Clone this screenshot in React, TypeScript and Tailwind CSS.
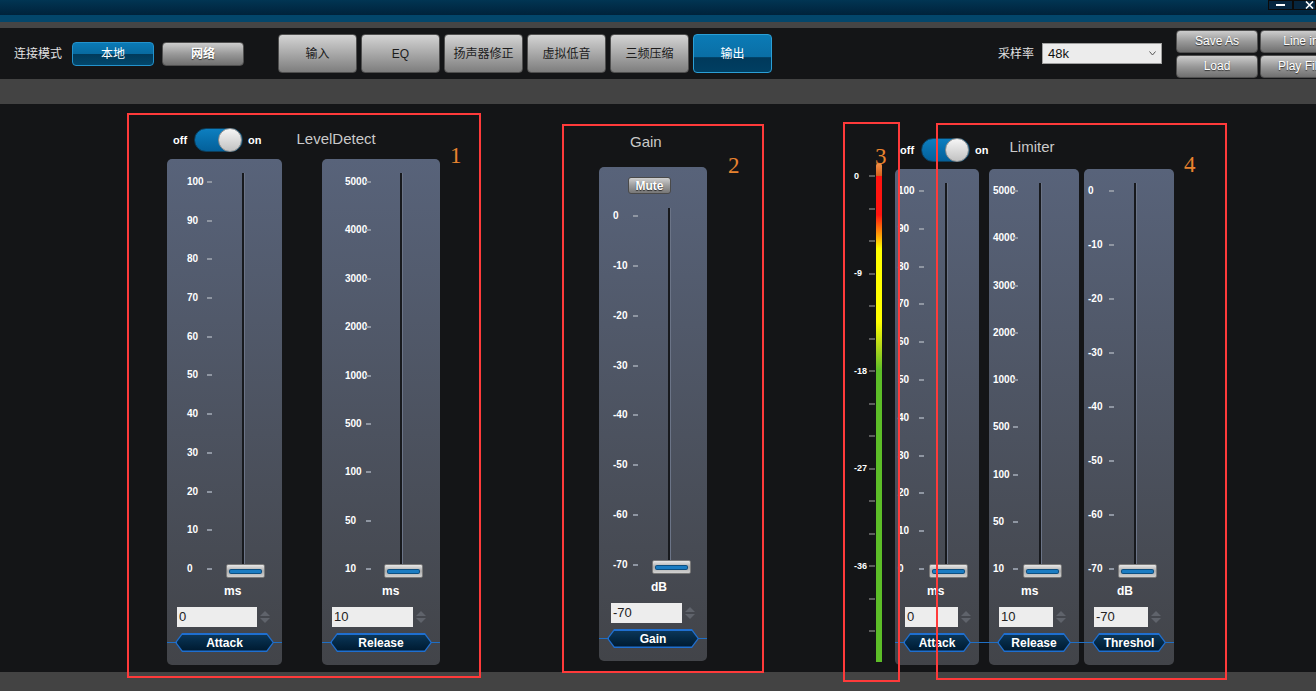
import React from "react";

type FaderProps = {
  cardW: string;
  cardH: string;
  labels: string[];
  scalePl: string;
  labelBox: string;
  scaleMt: string;
  scaleH: string;
  trackMl: string;
  trackH: string;
  unit: string;
  unitPl: string;
  value: string;
  inputPl: string;
  inputW: string;
  name: string;
  mute?: boolean;
  lineX?: string;
};

const Thumb = () => (
  <div className="h-[14px] w-[39px] rounded-[2px] border border-[#7a7a7a] bg-gradient-to-b from-[#e8e8e8] via-[#acacac] to-[#d2d2d2] flex items-center justify-center">
    <div className="h-[3px] w-[31px] rounded-[1px] bg-[#1b7cc2] shadow-[0_0_0_1px_#0d4f80]" />
  </div>
);

const Spinner = () => (
  <div className="ml-[3px] flex flex-col gap-[2px]">
    <div className="w-0 h-0 border-x-[5px] border-x-transparent border-b-[5px] border-b-[#5f636b]" />
    <div className="w-0 h-0 border-x-[5px] border-x-transparent border-t-[5px] border-t-[#5f636b]" />
  </div>
);

// hexagon label with the thin blue line running behind it
const HexLabel = ({ name, lineX }: { name: string; lineX: string }) => (
  <div className="relative h-[19px] px-[8px]">
    <div className={`absolute top-[9px] h-px bg-[#1f6fc4] ${lineX}`} />
    <div className="relative h-full p-[1.5px] bg-[#1f6fd0] [clip-path:polygon(7px_0,calc(100%_-_7px)_0,100%_50%,calc(100%_-_7px)_100%,7px_100%,0_50%)]">
      <div className="h-full w-full bg-gradient-to-b from-[#0c3658] to-[#001a30] [clip-path:polygon(6px_0,calc(100%_-_6px)_0,100%_50%,calc(100%_-_6px)_100%,6px_100%,0_50%)] flex items-center justify-center text-white text-[12px] font-bold leading-none whitespace-nowrap overflow-hidden">
        {name}
      </div>
    </div>
  </div>
);

const Toggle = () => (
  <div className="flex items-center">
    <span className="text-white text-[11px] font-bold">off</span>
    <div className="ml-[7px] w-[49px] h-[24px] rounded-full border border-[#0c3e5c] bg-gradient-to-b from-[#0d7fc0] to-[#04609a] flex justify-end items-center">
      <div className="w-[24px] h-[24px] rounded-full border border-[#8d8d8d] bg-gradient-to-b from-[#f6f6f6] to-[#c2c2c2]" />
    </div>
    <span className="ml-[5px] text-white text-[11px] font-bold">on</span>
  </div>
);

function Fader(p: FaderProps) {
  return (
    <div
      className={`flex flex-col shrink-0 rounded-[5px] bg-gradient-to-b from-[#58637a] to-[#424449] ${p.cardW} ${p.cardH}`}
    >
      {p.mute && (
        <div className="mt-[10px] ml-[29px] w-[43px] h-[17px] rounded-[3px] border border-[#4a4a4a] bg-gradient-to-b from-[#d0d0d0] via-[#9d9d9d] to-[#777777] flex items-center justify-center text-white text-[12px] font-bold [text-shadow:0_1px_1px_#222]">
          Mute
        </div>
      )}
      <div className="flex items-start">
        <div className={`flex flex-col justify-between ${p.scalePl} ${p.scaleMt} ${p.scaleH}`}>
          {p.labels.map((l) => (
            <div key={l} className="h-0 flex items-center">
              <span className={`${p.labelBox} text-[10px] font-bold text-white leading-none whitespace-nowrap`}>
                {l}
              </span>
              <span className="w-[5px] h-[2px] bg-[#8f96a2]" />
            </div>
          ))}
        </div>
        <div className={`flex flex-col w-[39px] mt-[14px] ${p.trackMl} ${p.trackH}`}>
          <div className="ml-[16px] w-[3px] flex-1 bg-[#17191d] border-r border-[#6b7487]" />
          <Thumb />
        </div>
      </div>
      <div className={`mt-[6px] h-[14px] leading-[14px] text-[12px] font-bold text-white ${p.unitPl}`}>
        {p.unit}
      </div>
      <div className={`mt-[9px] flex items-center ${p.inputPl}`}>
        <div className={`h-[20px] bg-[#ededed] text-[13px] text-[#222] pl-[2px] leading-[20px] ${p.inputW}`}>
          {p.value}
        </div>
        <Spinner />
      </div>
      <div className="mt-[6px]">
        <HexLabel name={p.name} lineX={p.lineX ?? "left-0 right-0"} />
      </div>
    </div>
  );
}

const tabs = ["输入", "EQ", "扬声器修正", "虚拟低音", "三频压缩"];
const grayBtn =
  "rounded-[4px] border border-[#505050] bg-gradient-to-b from-[#cdcdcd] via-[#999999] to-[#707070] text-white text-[12px] [text-shadow:0_1px_1px_#333] flex items-center justify-center shrink-0";

const meterTicks = ["0", "", "", "-9", "", "", "-18", "", "", "-27", "", "", "-36", "", ""];

export default function App() {
  return (
    <div className="relative w-[1316px] h-[691px] overflow-hidden bg-[#141517] font-['Liberation_Sans','Noto_Sans_CJK_SC',sans-serif]">
      {/* title bar */}
      <div className="flex justify-end h-[15px] bg-gradient-to-b from-[#013553] to-[#00223b]">
        <div className="w-[25px] h-[10px] border border-[#0b0b0b] bg-[#06263f] flex items-center justify-center">
          <div className="w-[9px] h-[2px] bg-white" />
        </div>
        <div className="w-[23px] h-[10px] border border-[#0b0b0b] bg-[#06263f] flex items-center pl-[11px]">
          <svg width="9" height="8" viewBox="0 0 9 8">
            <path d="M1 0.5 L8 7.5 M8 0.5 L1 7.5" stroke="white" strokeWidth="1.6" />
          </svg>
        </div>
      </div>
      <div className="h-[7px] bg-[#03466b]" />
      <div className="h-[6px] bg-[#454545]" />

      {/* toolbar */}
      <div className="flex items-center h-[51px] bg-[#141517] pl-[14px]">
        <span className="shrink-0 text-[12px] text-[#e2e2e2]">连接模式</span>
        <div className="ml-[10px] shrink-0 w-[82px] h-[24px] rounded-[4px] border border-[#2392cc] bg-[linear-gradient(to_bottom,#0a7ab6_0%,#086aa0_50%,#013a5b_51%,#02476c_100%)] text-white text-[12px] flex items-center justify-center">
          本地
        </div>
        <div className={`ml-[8px] w-[82px] h-[24px] font-bold ${grayBtn}`}>网络</div>
        <div className="ml-[34px] flex gap-[4px] shrink-0">
          {tabs.map((t) => (
            <div
              key={t}
              className="w-[79px] h-[39px] rounded-[4px] border border-[#4e4e4e] bg-gradient-to-b from-[#d4d4d4] via-[#a9a9a9] to-[#7e7e7e] text-[12px] text-[#1c1c1c] flex items-center justify-center"
            >
              {t}
            </div>
          ))}
          <div className="w-[79px] h-[39px] rounded-[4px] border border-[#2b9fd6] bg-[linear-gradient(to_bottom,#0b7bb6_0%,#0a6ea5_60%,#00395b_61%,#003f62_100%)] text-[12px] text-white flex items-center justify-center">
            输出
          </div>
        </div>
        <span className="ml-[226px] shrink-0 text-[12px] text-[#e2e2e2]">采样率</span>
        <div className="ml-[8px] shrink-0 w-[120px] h-[21px] bg-[#ececec] border border-[#a0a0a0] flex items-center justify-between pl-[5px] pr-[5px] text-[13px] text-[#111]">
          <span>48k</span>
          <svg width="7" height="5" viewBox="0 0 7 5">
            <path d="M0.5 0.5 L3.5 4 L6.5 0.5" stroke="#555" strokeWidth="1" fill="none" />
          </svg>
        </div>
        <div className="ml-[14px] flex flex-col gap-[2px] shrink-0">
          <div className={`w-[82px] h-[23px] ${grayBtn}`}>Save As</div>
          <div className={`w-[82px] h-[23px] ${grayBtn}`}>Load</div>
        </div>
        <div className="ml-[2px] flex flex-col gap-[2px] shrink-0">
          <div className={`w-[82px] h-[23px] ${grayBtn}`}>Line in</div>
          <div className={`w-[82px] h-[23px] ${grayBtn}`}>Play File</div>
        </div>
      </div>
      <div className="h-[25px] bg-[#434343]" />

      {/* main */}
      <div className="flex h-[568px] bg-[#141517]">
        {/* LevelDetect */}
        <div className="ml-[167px] flex flex-col w-[273px] shrink-0 pt-[24px]">
          <div className="flex items-center h-[24px] pl-[6px]">
            <Toggle />
            <span className="ml-[35px] mb-[2px] text-[15px] text-[#cacaca]">LevelDetect</span>
          </div>
          <div className="mt-[7px] flex gap-[40px]">
            <Fader
              cardW="w-[115px]"
              cardH="h-[506px]"
              labels={["100", "90", "80", "70", "60", "50", "40", "30", "20", "10", "0"]}
              scalePl="pl-[20px]"
              labelBox="w-[20px]"
              scaleMt="mt-[23px]"
              scaleH="h-[387px]"
              trackMl="ml-[14px]"
              trackH="h-[405px]"
              unit="ms"
              unitPl="pl-[57px]"
              value="0"
              inputPl="pl-[10px]"
              inputW="w-[80px]"
              name="Attack"
            />
            <Fader
              cardW="w-[118px]"
              cardH="h-[506px]"
              labels={["5000", "4000", "3000", "2000", "1000", "500", "100", "50", "10"]}
              scalePl="pl-[23px]"
              labelBox="w-[21px]"
              scaleMt="mt-[23px]"
              scaleH="h-[387px]"
              trackMl="ml-[13px]"
              trackH="h-[405px]"
              unit="ms"
              unitPl="pl-[60px]"
              value="10"
              inputPl="pl-[10px]"
              inputW="w-[81px]"
              name="Release"
            />
          </div>
        </div>

        {/* Gain */}
        <div className="ml-[159px] flex flex-col w-[108px] shrink-0 pt-[29px]">
          <div className="h-[18px] leading-[18px] pl-[31px] text-[15px] text-[#cacaca]">Gain</div>
          <div className="mt-[16px]">
            <Fader
              cardW="w-[108px]"
              cardH="h-[494px]"
              labels={["0", "-10", "-20", "-30", "-40", "-50", "-60", "-70"]}
              scalePl="pl-[14px]"
              labelBox="w-[20px]"
              scaleMt="mt-[22px]"
              scaleH="h-[349px]"
              trackMl="ml-[14px]"
              trackH="h-[366px]"
              unit="dB"
              unitPl="pl-[52px]"
              value="-70"
              inputPl="pl-[12px]"
              inputW="w-[71px]"
              name="Gain"
              mute
            />
          </div>
        </div>

        {/* meter */}
        <div className="ml-[147px] flex flex-col shrink-0 pt-[59px]">
          <div className="ml-[22px] w-[6px] h-[13px] rounded-t-[3px] bg-gradient-to-b from-[#f59248] to-[#d5601c]" />
          <div className="flex items-start">
            <div className="flex flex-col justify-between h-[455px]">
              {meterTicks.map((l, i) => (
                <div key={i} className="h-0 flex items-center">
                  <span className="w-[15px] text-[9px] font-bold text-white leading-none whitespace-nowrap">{l}</span>
                  <span className="w-[6px] h-[2px] bg-[#5c5c5c]" />
                </div>
              ))}
            </div>
            <div className="ml-[1px] w-[6px] h-[486px] bg-[linear-gradient(to_bottom,#ff1410_0%,#ff1410_8%,#ff7a0a_11%,#ffff00_15%,#ffff00_30%,#b4d81a_35%,#5dbd28_40%,#5dbd28_100%)]" />
          </div>
        </div>

        {/* Limiter */}
        <div className="ml-[13px] flex flex-col w-[279px] shrink-0 pt-[34px]">
          <div className="flex items-center h-[24px] pl-[5px]">
            <Toggle />
            <span className="ml-[21px] mb-[6px] text-[15px] text-[#cacaca]">Limiter</span>
          </div>
          <div className="mt-[7px] flex">
            <Fader
              cardW="w-[84px]"
              cardH="h-[496px]"
              labels={["100", "90", "80", "70", "60", "50", "40", "30", "20", "10", "0"]}
              scalePl="pl-[3px]"
              labelBox="w-[21px]"
              scaleMt="mt-[22px]"
              scaleH="h-[378px]"
              trackMl="ml-[5px]"
              trackH="h-[395px]"
              unit="ms"
              unitPl="pl-[32px]"
              value="0"
              inputPl="pl-[10px]"
              inputW="w-[53px]"
              name="Attack"
              lineX="left-0 -right-[10px]"
            />
            <div className="ml-[10px]">
              <Fader
                cardW="w-[90px]"
                cardH="h-[496px]"
                labels={["5000", "4000", "3000", "2000", "1000", "500", "100", "50", "10"]}
                scalePl="pl-[4px]"
                labelBox="w-[20px]"
                scaleMt="mt-[22px]"
                scaleH="h-[378px]"
                trackMl="ml-[5px]"
                trackH="h-[395px]"
                unit="ms"
                unitPl="pl-[32px]"
                value="10"
                inputPl="pl-[10px]"
                inputW="w-[54px]"
                name="Release"
                lineX="left-0 -right-[5px]"
              />
            </div>
            <div className="ml-[5px]">
              <Fader
                cardW="w-[90px]"
                cardH="h-[496px]"
                labels={["0", "-10", "-20", "-30", "-40", "-50", "-60", "-70"]}
                scalePl="pl-[4px]"
                labelBox="w-[21px]"
                scaleMt="mt-[22px]"
                scaleH="h-[378px]"
                trackMl="ml-[4px]"
                trackH="h-[395px]"
                unit="dB"
                unitPl="pl-[33px]"
                value="-70"
                inputPl="pl-[10px]"
                inputW="w-[54px]"
                name="Threshol"
              />
            </div>
          </div>
        </div>
      </div>
      <div className="h-[19px] bg-[#434343]" />

      {/* annotation overlays */}
      <div className="pointer-events-none absolute left-[127px] top-[113px] w-[354px] h-[565px] border-2 border-[#ff3a3a]" />
      <div className="pointer-events-none absolute left-[562px] top-[124px] w-[202px] h-[549px] border-2 border-[#ff3a3a]" />
      <div className="pointer-events-none absolute left-[843px] top-[122px] w-[57px] h-[560px] border-2 border-[#ff3a3a]" />
      <div className="pointer-events-none absolute left-[936px] top-[123px] w-[291px] h-[557px] border-2 border-[#ff3a3a]" />
      <span className="absolute left-[450px] top-[144px] text-[23px] leading-none text-[#e8832f] font-['Liberation_Serif',serif]">1</span>
      <span className="absolute left-[728px] top-[154px] text-[23px] leading-none text-[#e8832f] font-['Liberation_Serif',serif]">2</span>
      <span className="absolute left-[875px] top-[145px] text-[23px] leading-none text-[#e8832f] font-['Liberation_Serif',serif]">3</span>
      <span className="absolute left-[1184px] top-[153px] text-[23px] leading-none text-[#e8832f] font-['Liberation_Serif',serif]">4</span>
    </div>
  );
}
